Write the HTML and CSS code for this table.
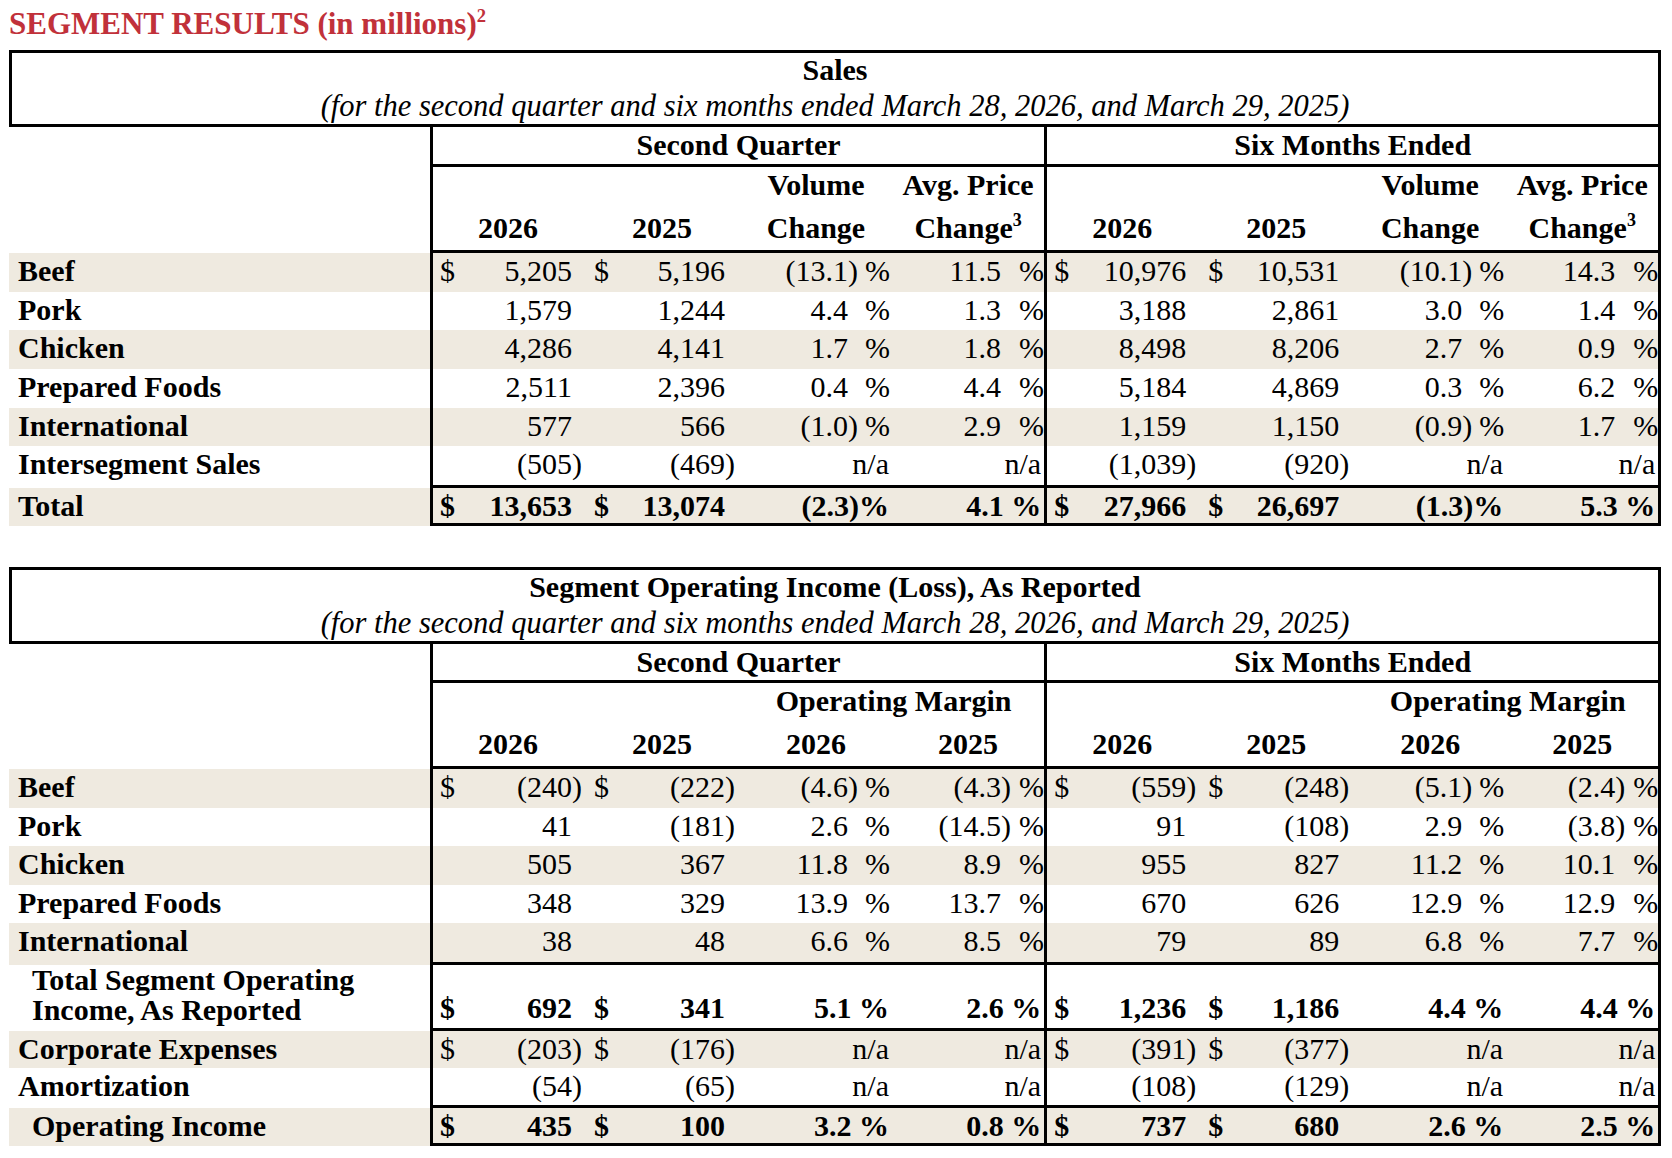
FILE: index.html
```html
<!DOCTYPE html>
<html lang="en">
  <head>
    <meta charset="UTF-8" />
    <title>Segment Results</title>
    <link rel="stylesheet" href="styles.css">
  </head>
  <body>
    <div class="page">
      <div class="page-title">SEGMENT RESULTS (in millions)<sup>2</sup></div>

      <!-- Sales -->
      <div class="box">
        <div class="box-title">Sales</div>
        <div class="box-sub">(for the second quarter and six months ended March 28, 2026, and March 29, 2025)</div>
      </div>
      <table class="seg">
        <colgroup>
          <col class="c-lbl">
          <col class="c-dol"><col class="c-num"><col class="c-par"><col class="c-dol2"><col class="c-num2"><col class="c-par2">
          <col class="c-pct"><col class="c-par3"><col class="c-pc"><col class="c-pct2"><col class="c-par4"><col class="c-pc2">
          <col class="c-dol"><col class="c-num"><col class="c-par"><col class="c-dol2"><col class="c-num2"><col class="c-par2">
          <col class="c-pct"><col class="c-par3"><col class="c-pc"><col class="c-pct2"><col class="c-par4"><col class="c-pc2-end">
        </colgroup>
        <tr class="h40 bb">
          <td class="lbl"></td>
          <td colspan="12" class="grp bl">Second Quarter</td>
          <td colspan="12" class="grp bl br">Six Months Ended</td>
        </tr>
        <tr class="h39">
          <td class="lbl"></td>
          <td colspan="3" class="bl"></td><td colspan="3"></td>
          <td colspan="3" class="hd-a g3">Volume</td><td colspan="3" class="hd-a">Avg. Price</td>
          <td colspan="3" class="bl"></td><td colspan="3"></td>
          <td colspan="3" class="hd-a g3">Volume</td><td colspan="3" class="hd-a br">Avg. Price</td>
        </tr>
        <tr class="h47 bb">
          <td class="lbl"></td>
          <td colspan="3" class="hd-b g1 bl">2026</td><td colspan="3" class="hd-b g2">2025</td>
          <td colspan="3" class="hd-b g3">Change</td><td colspan="3" class="hd-b">Change<sup>3</sup></td>
          <td colspan="3" class="hd-b g1 bl">2026</td><td colspan="3" class="hd-b g2">2025</td>
          <td colspan="3" class="hd-b g3">Change</td><td colspan="3" class="hd-b br">Change<sup>3</sup></td>
        </tr>
        <tr class="h39 sh">
          <td class="lbl">Beef</td>
          <td class="d bl">$</td><td class="n">5,205</td><td></td><td class="d2">$</td><td class="n">5,196</td><td></td>
          <td class="n">(13.1</td><td>)</td><td>%</td><td class="n">11.5</td><td></td><td>%</td>
          <td class="d bl">$</td><td class="n">10,976</td><td></td><td class="d2">$</td><td class="n">10,531</td><td></td>
          <td class="n">(10.1</td><td>)</td><td>%</td><td class="n">14.3</td><td></td><td class="br">%</td>
        </tr>
        <tr class="h38">
          <td class="lbl">Pork</td>
          <td class="bl"></td><td class="n">1,579</td><td></td><td></td><td class="n">1,244</td><td></td>
          <td class="n">4.4</td><td></td><td>%</td><td class="n">1.3</td><td></td><td>%</td>
          <td class="bl"></td><td class="n">3,188</td><td></td><td></td><td class="n">2,861</td><td></td>
          <td class="n">3.0</td><td></td><td>%</td><td class="n">1.4</td><td></td><td class="br">%</td>
        </tr>
        <tr class="h39 sh">
          <td class="lbl">Chicken</td>
          <td class="bl"></td><td class="n">4,286</td><td></td><td></td><td class="n">4,141</td><td></td>
          <td class="n">1.7</td><td></td><td>%</td><td class="n">1.8</td><td></td><td>%</td>
          <td class="bl"></td><td class="n">8,498</td><td></td><td></td><td class="n">8,206</td><td></td>
          <td class="n">2.7</td><td></td><td>%</td><td class="n">0.9</td><td></td><td class="br">%</td>
        </tr>
        <tr class="h39">
          <td class="lbl">Prepared Foods</td>
          <td class="bl"></td><td class="n">2,511</td><td></td><td></td><td class="n">2,396</td><td></td>
          <td class="n">0.4</td><td></td><td>%</td><td class="n">4.4</td><td></td><td>%</td>
          <td class="bl"></td><td class="n">5,184</td><td></td><td></td><td class="n">4,869</td><td></td>
          <td class="n">0.3</td><td></td><td>%</td><td class="n">6.2</td><td></td><td class="br">%</td>
        </tr>
        <tr class="h38 sh">
          <td class="lbl">International</td>
          <td class="bl"></td><td class="n">577</td><td></td><td></td><td class="n">566</td><td></td>
          <td class="n">(1.0</td><td>)</td><td>%</td><td class="n">2.9</td><td></td><td>%</td>
          <td class="bl"></td><td class="n">1,159</td><td></td><td></td><td class="n">1,150</td><td></td>
          <td class="n">(0.9</td><td>)</td><td>%</td><td class="n">1.7</td><td></td><td class="br">%</td>
        </tr>
        <tr class="h42 bb">
          <td class="lbl">Intersegment Sales</td>
          <td class="bl"></td><td class="n">(505</td><td>)</td><td></td><td class="n">(469</td><td>)</td>
          <td colspan="3" class="na">n/a</td><td colspan="3" class="na">n/a</td>
          <td class="bl"></td><td class="n">(1,039</td><td>)</td><td></td><td class="n">(920</td><td>)</td>
          <td colspan="3" class="na">n/a</td><td colspan="3" class="na br">n/a</td>
        </tr>
        <tr class="h38 sh bb tot">
          <td class="lbl">Total</td>
          <td class="d bl">$</td><td class="n">13,653</td><td></td><td class="d2">$</td><td class="n">13,074</td><td></td>
          <td colspan="3" class="na">(2.3)%</td><td colspan="3" class="na">4.1&nbsp;%</td>
          <td class="d bl">$</td><td class="n">27,966</td><td></td><td class="d2">$</td><td class="n">26,697</td><td></td>
          <td colspan="3" class="na">(1.3)%</td><td colspan="3" class="na br">5.3&nbsp;%</td>
        </tr>
      </table>

      <!-- Segment Operating Income -->
      <div class="box box-2">
        <div class="box-title">Segment Operating Income (Loss), As Reported</div>
        <div class="box-sub">(for the second quarter and six months ended March 28, 2026, and March 29, 2025)</div>
      </div>
      <table class="seg">
        <colgroup>
          <col class="c-lbl">
          <col class="c-dol"><col class="c-num"><col class="c-par"><col class="c-dol2"><col class="c-num2"><col class="c-par2">
          <col class="c-pct"><col class="c-par3"><col class="c-pc"><col class="c-pct2"><col class="c-par4"><col class="c-pc2">
          <col class="c-dol"><col class="c-num"><col class="c-par"><col class="c-dol2"><col class="c-num2"><col class="c-par2">
          <col class="c-pct"><col class="c-par3"><col class="c-pc"><col class="c-pct2"><col class="c-par4"><col class="c-pc2-end">
        </colgroup>
        <tr class="h39 bb">
          <td class="lbl"></td>
          <td colspan="12" class="grp bl">Second Quarter</td>
          <td colspan="12" class="grp bl br">Six Months Ended</td>
        </tr>
        <tr class="h39">
          <td class="lbl"></td>
          <td colspan="6" class="bl"></td><td colspan="6" class="hd-a">Operating Margin</td>
          <td colspan="6" class="bl"></td><td colspan="6" class="hd-a br">Operating Margin</td>
        </tr>
        <tr class="h47 bb">
          <td class="lbl"></td>
          <td colspan="3" class="hd-b g1 bl">2026</td><td colspan="3" class="hd-b g2">2025</td>
          <td colspan="3" class="hd-b g3">2026</td><td colspan="3" class="hd-b">2025</td>
          <td colspan="3" class="hd-b g1 bl">2026</td><td colspan="3" class="hd-b g2">2025</td>
          <td colspan="3" class="hd-b g3">2026</td><td colspan="3" class="hd-b br">2025</td>
        </tr>
        <tr class="h39 sh">
          <td class="lbl">Beef</td>
          <td class="d bl">$</td><td class="n">(240</td><td>)</td><td class="d2">$</td><td class="n">(222</td><td>)</td>
          <td class="n">(4.6</td><td>)</td><td>%</td><td class="n">(4.3</td><td>)</td><td>%</td>
          <td class="d bl">$</td><td class="n">(559</td><td>)</td><td class="d2">$</td><td class="n">(248</td><td>)</td>
          <td class="n">(5.1</td><td>)</td><td>%</td><td class="n">(2.4</td><td>)</td><td class="br">%</td>
        </tr>
        <tr class="h38">
          <td class="lbl">Pork</td>
          <td class="bl"></td><td class="n">41</td><td></td><td></td><td class="n">(181</td><td>)</td>
          <td class="n">2.6</td><td></td><td>%</td><td class="n">(14.5</td><td>)</td><td>%</td>
          <td class="bl"></td><td class="n">91</td><td></td><td></td><td class="n">(108</td><td>)</td>
          <td class="n">2.9</td><td></td><td>%</td><td class="n">(3.8</td><td>)</td><td class="br">%</td>
        </tr>
        <tr class="h39 sh">
          <td class="lbl">Chicken</td>
          <td class="bl"></td><td class="n">505</td><td></td><td></td><td class="n">367</td><td></td>
          <td class="n">11.8</td><td></td><td>%</td><td class="n">8.9</td><td></td><td>%</td>
          <td class="bl"></td><td class="n">955</td><td></td><td></td><td class="n">827</td><td></td>
          <td class="n">11.2</td><td></td><td>%</td><td class="n">10.1</td><td></td><td class="br">%</td>
        </tr>
        <tr class="h38">
          <td class="lbl">Prepared Foods</td>
          <td class="bl"></td><td class="n">348</td><td></td><td></td><td class="n">329</td><td></td>
          <td class="n">13.9</td><td></td><td>%</td><td class="n">13.7</td><td></td><td>%</td>
          <td class="bl"></td><td class="n">670</td><td></td><td></td><td class="n">626</td><td></td>
          <td class="n">12.9</td><td></td><td>%</td><td class="n">12.9</td><td></td><td class="br">%</td>
        </tr>
        <tr class="h42 sh bb">
          <td class="lbl">International</td>
          <td class="bl"></td><td class="n">38</td><td></td><td></td><td class="n">48</td><td></td>
          <td class="n">6.6</td><td></td><td>%</td><td class="n">8.5</td><td></td><td>%</td>
          <td class="bl"></td><td class="n">79</td><td></td><td></td><td class="n">89</td><td></td>
          <td class="n">6.8</td><td></td><td>%</td><td class="n">7.7</td><td></td><td class="br">%</td>
        </tr>
        <tr class="h66 bb tot sub">
          <td class="lbl ind">Total Segment Operating<br>Income, As Reported</td>
          <td class="d bl">$</td><td class="n">692</td><td></td><td class="d2">$</td><td class="n">341</td><td></td>
          <td colspan="3" class="na">5.1&nbsp;%</td><td colspan="3" class="na">2.6&nbsp;%</td>
          <td class="d bl">$</td><td class="n">1,236</td><td></td><td class="d2">$</td><td class="n">1,186</td><td></td>
          <td colspan="3" class="na">4.4&nbsp;%</td><td colspan="3" class="na br">4.4&nbsp;%</td>
        </tr>
        <tr class="h37 sh">
          <td class="lbl">Corporate Expenses</td>
          <td class="d bl">$</td><td class="n">(203</td><td>)</td><td class="d2">$</td><td class="n">(176</td><td>)</td>
          <td colspan="3" class="na">n/a</td><td colspan="3" class="na">n/a</td>
          <td class="d bl">$</td><td class="n">(391</td><td>)</td><td class="d2">$</td><td class="n">(377</td><td>)</td>
          <td colspan="3" class="na">n/a</td><td colspan="3" class="na br">n/a</td>
        </tr>
        <tr class="h40 bb">
          <td class="lbl">Amortization</td>
          <td class="bl"></td><td class="n">(54</td><td>)</td><td></td><td class="n">(65</td><td>)</td>
          <td colspan="3" class="na">n/a</td><td colspan="3" class="na">n/a</td>
          <td class="bl"></td><td class="n">(108</td><td>)</td><td></td><td class="n">(129</td><td>)</td>
          <td colspan="3" class="na">n/a</td><td colspan="3" class="na br">n/a</td>
        </tr>
        <tr class="h38 sh bb tot">
          <td class="lbl ind">Operating Income</td>
          <td class="d bl">$</td><td class="n">435</td><td></td><td class="d2">$</td><td class="n">100</td><td></td>
          <td colspan="3" class="na">3.2&nbsp;%</td><td colspan="3" class="na">0.8&nbsp;%</td>
          <td class="d bl">$</td><td class="n">737</td><td></td><td class="d2">$</td><td class="n">680</td><td></td>
          <td colspan="3" class="na">2.6&nbsp;%</td><td colspan="3" class="na br">2.5&nbsp;%</td>
        </tr>
      </table>
    </div>
  </body>
</html>
```

FILE: styles.css
```css
/* Page */
body {
  margin: 0;
  background-color: #fff;
  color: #000;
  font-family: "Liberation Serif", "Times New Roman", serif;
  font-size: 30px;
}

.page {
  padding-left: 9px;
  width: 1652px;
}

sup {
  font-size: 0.6em;
  line-height: 0;
  vertical-align: 0.65em;
}

.page-title {
  color: #c1313a;
  font-size: 31px;
  font-weight: bold;
  line-height: 40px;
  padding-top: 4px;
  margin-bottom: 6px;
}

/* Title boxes above each table */
.box {
  border: 3px solid #000;
  text-align: center;
}

.box-title {
  font-weight: bold;
  line-height: 34px;
}

.box-sub {
  font-size: 30.5px;
  font-style: italic;
  line-height: 35px;
  padding-top: 2px;
}

.box-2 {
  margin-top: 41px;
}

/* Tables */
.seg {
  width: 1652px;
  table-layout: fixed;
  border-collapse: separate;
  border-spacing: 0;
}

.c-lbl { width: 421px; }
.c-dol { width: 33px; }
.c-num { width: 109px; }
.c-par { width: 16px; }
.c-dol2 { width: 20px; }
.c-num2 { width: 117px; }
.c-par2 { width: 18px; }
.c-pct { width: 105px; }
.c-par3 { width: 17px; }
.c-pc { width: 27px; }
.c-pct2 { width: 109px; }
.c-par4 { width: 18px; }
.c-pc2 { width: 25px; }
.c-pc2-end { width: 28px; }

.seg td {
  padding: 1px 0 0 0;
  line-height: 34px;
  vertical-align: top;
  white-space: nowrap;
  overflow: visible;
}

.h37 { height: 37px; }
.h38 { height: 38px; }
.h39 { height: 39px; }
.h40 { height: 40px; }
.h42 { height: 42px; }
.h47 { height: 47px; }
.h66 { height: 66px; }

.sh td {
  background-color: #efeae0;
}

.seg td.lbl {
  font-weight: bold;
  padding-left: 9px;
  border: none;
}

.seg td.ind {
  padding-left: 23px;
}

.bl {
  border-left: 3px solid #000;
}

.br {
  border-right: 3px solid #000;
}

.bb td {
  border-bottom: 3px solid #000;
}

/* Header cells */
.seg td.grp {
  font-weight: bold;
  text-align: center;
  line-height: 35px;
  padding: 0;
}

.seg td.hd-a {
  font-weight: bold;
  text-align: center;
  line-height: 36px;
  padding: 0;
}

.seg td.hd-b {
  font-weight: bold;
  text-align: center;
  vertical-align: bottom;
  line-height: 44px;
  padding: 0;
}

.seg td.g1 { padding-right: 5px; }
.seg td.g2 { padding-right: 7px; }
.seg td.g3 { padding-right: 3px; }

/* Value cells */
.seg td.d { padding-left: 7px; }
.seg td.d2 { padding-left: 6px; }

.n {
  text-align: right;
}

.seg td.na {
  text-align: right;
  padding-right: 3px;
}

.tot td {
  font-weight: bold;
}

/* Two-line subtotal row */
.sub td {
  vertical-align: bottom;
  padding: 0 0 3px 0;
}

.seg .sub td.lbl {
  line-height: 30px;
  padding-bottom: 6px;
}
```
